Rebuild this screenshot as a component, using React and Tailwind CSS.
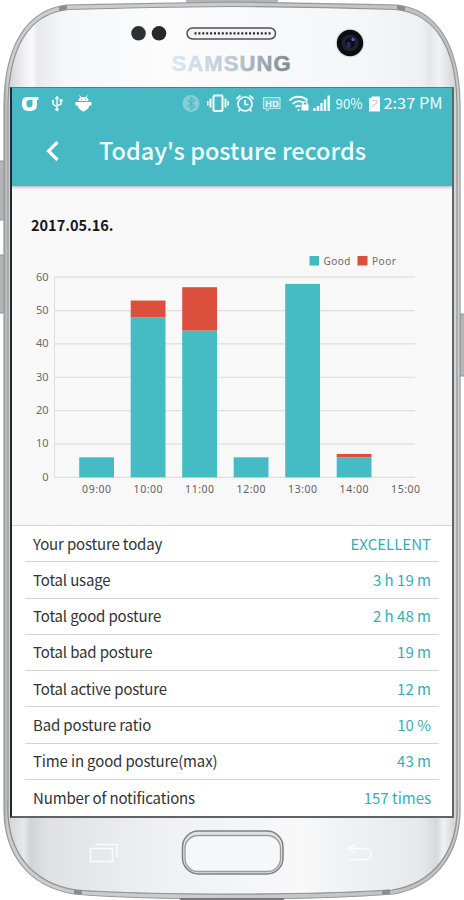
import React from 'react';

const hours = [
  { label: '09:00', good: 6, poor: 0 },
  { label: '10:00', good: 48, poor: 5 },
  { label: '11:00', good: 44, poor: 13 },
  { label: '12:00', good: 6, poor: 0 },
  { label: '13:00', good: 58, poor: 0 },
  { label: '14:00', good: 6, poor: 1 },
  { label: '15:00', good: 0, poor: 0 },
];

const records = [
  { label: 'Your posture today', value: 'EXCELLENT' },
  { label: 'Total usage', value: '3 h 19 m' },
  { label: 'Total good posture', value: '2 h 48 m' },
  { label: 'Total bad posture', value: '19 m' },
  { label: 'Total active posture', value: '12 m' },
  { label: 'Bad posture ratio', value: '10 %' },
  { label: 'Time in good posture(max)', value: '43 m' },
  { label: 'Number of notifications', value: '157 times' },
];

const BODY =
  'M4 103C5 48 25 10 67 5C120 4 170 3 232 2C294 3 344 4 397 5C439 10 459 48 460 103V812C459 852 438 886 394 894C340 898 290 899 232 899C174 899 120 898 74 894C26 886 5 852 4 812Z';
const FACE =
  'M8 103C9 50 27 14 68 9.500C120 8 170 7 232 6.500C294 7 344 8 396 9.500C437 14 456 50 457 103V812C456 850 435 883 392 890C340 893 290 894 232 894C174 894 120 893 76 890C30 883 9 850 8 812Z';

// Phone shell drawn behind the screen
const PhoneShell = () => (
  <svg className="absolute inset-0" width="464" height="900" viewBox="0 0 464 900" fill="none">
    <defs>
      <linearGradient id="rim" x1="0" y1="0" x2="1" y2="0">
        <stop offset="0" stopColor="#a2a4a6" />
        <stop offset="0.008" stopColor="#cccdcf" />
        <stop offset="0.5" stopColor="#c9cacc" />
        <stop offset="0.985" stopColor="#bfc1c2" />
        <stop offset="1" stopColor="#d5d6d7" />
      </linearGradient>
      <linearGradient id="face" x1="0" y1="0" x2="1" y2="0">
        <stop offset="0" stopColor="#cfd1d3" />
        <stop offset="0.03" stopColor="#ececee" />
        <stop offset="0.055" stopColor="#fafafb" />
        <stop offset="0.065" stopColor="#e9eaec" />
        <stop offset="0.13" stopColor="#f6f7f8" />
        <stop offset="0.35" stopColor="#fcfcfd" />
        <stop offset="0.8" stopColor="#f5f6f7" />
        <stop offset="0.92" stopColor="#eff0f2" />
        <stop offset="0.94" stopColor="#e4e6e8" />
        <stop offset="0.96" stopColor="#f1f2f3" />
        <stop offset="1" stopColor="#d0d2d4" />
      </linearGradient>
      <linearGradient id="chin" x1="0" y1="0" x2="1" y2="0">
        <stop offset="0" stopColor="#d2d4d5" />
        <stop offset="0.035" stopColor="#e7e8e9" />
        <stop offset="0.05" stopColor="#d1d3d5" />
        <stop offset="0.09" stopColor="#dfe1e3" />
        <stop offset="0.35" stopColor="#f0f1f3" />
        <stop offset="0.65" stopColor="#f8f8f9" />
        <stop offset="0.92" stopColor="#e6e8ea" />
        <stop offset="0.955" stopColor="#d6d9db" />
        <stop offset="0.97" stopColor="#f0f1f2" />
        <stop offset="1" stopColor="#cbced0" />
      </linearGradient>
      <linearGradient id="brand" x1="171" y1="0" x2="291" y2="0" gradientUnits="userSpaceOnUse">
        <stop offset="0" stopColor="#dfe7f1" />
        <stop offset="0.5" stopColor="#c0cad6" />
        <stop offset="1" stopColor="#7b8993" />
      </linearGradient>
      <clipPath id="chinClip">
        <rect y="800" width="464" height="100" />
      </clipPath>
    </defs>

    <g fill="#b4b5b6" stroke="#929394" strokeWidth="1">
      <rect x="-2" y="161" width="7" height="59" />
      <rect x="-2" y="255" width="7" height="58" />
      <rect x="460" y="314" width="7" height="62" />
    </g>
    <path d="M186 1.500h92" stroke="#b3b4b6" strokeWidth="3" />
    <path d={BODY} fill="url(#rim)" stroke="#97999b" strokeWidth="1.200" />
    <path d={FACE} fill="url(#face)" stroke="#929496" strokeWidth="1.200" />
    <g clipPath="url(#chinClip)">
      <path d={FACE} fill="url(#chin)" stroke="#929496" strokeWidth="1.200" />
      <path d="M180 899h104" stroke="#77777b" strokeWidth="2" />
    </g>
    <path d="M59 6.500l8-1.500v4.500l-8 1.500zM397 5l8 1.500v4.500l-8-1.500zM74 889.500l8 .500v4.500l-8-.500zM382 890l8-.500v4.500l-8 .500z" fill="#8a8c8f" />

    {/* sensors, speaker and camera */}
    <circle cx="138.500" cy="33.300" r="7.300" fill="#2d3035" />
    <circle cx="159" cy="33.300" r="7.300" fill="#25282d" />
    <rect x="187" y="28" width="88.500" height="11" rx="5.500" fill="#f4f4f5" stroke="#515155" strokeWidth="1.500" />
    <path d="M194.500 33.300h76" stroke="#25252a" strokeWidth="2.200" strokeDasharray="2 1.900" />
    <circle cx="350" cy="43" r="14.500" fill="#dfe1e5" />
    <circle cx="350" cy="43" r="13.200" fill="#0c0d11" />
    <circle cx="350" cy="43" r="8.500" fill="#20222b" />
    <circle cx="350" cy="43" r="5" fill="#0a0b1c" />
    <ellipse cx="348.500" cy="45" rx="2.300" ry="3.200" fill="#29275f" />
    <circle cx="353" cy="39.500" r="1.700" fill="#6152b5" />
    <text
      x="171.500"
      y="71"
      textLength="119"
      lengthAdjust="spacing"
      fill="url(#brand)"
      stroke="url(#brand)"
      strokeWidth="0.500"
      className="font-['Liberation_Sans_Narrow','Liberation_Sans'] text-[22px] font-bold"
    >
      SAMSUNG
    </text>

    {/* hardware keys */}
    <rect x="182.500" y="831" width="100.500" height="43" rx="16" fill="#e1e2e3" stroke="#7e8082" strokeWidth="1.500" />
    <rect x="185" y="835.500" width="95.500" height="36" rx="13" fill="#f6f7f8" stroke="#999b9d" strokeWidth="1.300" />
    <g stroke="#fafbfb" strokeWidth="1.600">
      <path d="M90.500 848.500h22v13h-22z" />
      <path d="M95 844.500h22v13" />
    </g>
    <path d="M348 848.500h17c8 0 8 11 0 11h-16M355 844.500l-7 4 7 3.500" stroke="#fbfbfc" strokeWidth="1.600" />
  </svg>
);

const StatusBar = () => (
  <svg className="block" width="440" height="32" viewBox="12 88 440 32" fill="none">
    <path d="M38.500 97H28c-4.500 0-6 2-6 6.500 0 5.500 2 7.500 7.500 7.500s7.500-2 7.500-7v-4h1.500zM26.500 103.500c0 3 1 4 3 4s3-1 3-4V100h-2c-3 0-4 .700-4 3.500Z" fill="#fff" fillRule="evenodd" />

    <g stroke="#e7f8f9" strokeWidth="1.500">
      <path d="M57 97v12M53 101v3l4 3M61 100v4l-4 2" />
      <path d="M54.500 99L57 95.500 59.500 99Z" fill="#e7f8f9" stroke="none" />
      <circle cx="53" cy="101" r="1.200" fill="#e7f8f9" stroke="none" />
      <path d="M59.500 99h3v3h-3z" fill="#e7f8f9" stroke="none" />
      <circle cx="57" cy="109.500" r="1.800" fill="#e7f8f9" stroke="none" />
    </g>

    <g fill="#fff">
      <path d="M78.500 101c0-3 2-4 5-4s5 1 5 4zM75.500 102h16v3.500h-16zM77.500 104h12c0 4-2.500 6-6 7.500-3.500-1.500-6-3.500-6-7.500z" />
      <path d="M79.500 95.500l1.500 2M87.500 95.500l-1.500 2" stroke="#fff" />
      <path d="M81 99.500h1M85 99.500h1" stroke="#47b9c4" />
    </g>

    <circle cx="191" cy="103.500" r="8.500" fill="#86ced5" />
    <path d="M187.500 100l7 6.500-3.500 3V97.500l3.500 3-7 6.500" stroke="#4cb5bf" strokeWidth="1.200" />

    <g stroke="#fff">
      <rect x="213.500" y="95.500" width="9" height="15.500" rx="1" strokeWidth="2" />
      <path d="M210.500 98.500v9M225.500 98.500v9" strokeWidth="2" />
      <path d="M207.800 101v4.500M228.200 101v4.500" strokeWidth="1.500" />
    </g>

    <g stroke="#f2ffff" strokeWidth="1.700">
      <circle cx="245" cy="104" r="7" />
      <path d="M245 100v4.500h3.500M236.500 99l4-3.500M253.500 99l-4-3.500" />
      <path d="M240 109.500l-1.500 2M250 109.500l1.500 2" />
    </g>

    <path d="M263.500 97.500h16.500v11h-10.500l-2.500 2-1-2h-2.500z" fill="#6cc6cd" stroke="#b5e3e6" strokeWidth="1.200" />
    <text x="265" y="106.500" textLength="14" lengthAdjust="spacingAndGlyphs" fill="#eaffff" className="font-['Noto_Sans'] text-[9.500px] font-semibold">HD</text>

    <g stroke="#fff" strokeWidth="1.900">
      <path d="M289.500 100.500c5-5 13-5 18 0M292.500 104c4-3.500 8-3.500 11-1M295.500 107c2-1.500 3.500-1.500 5-.500" />
      <path d="M298 109.500l1 1" />
    </g>
    <rect x="301.500" y="104.500" width="7" height="6" fill="#fff" />
    <path d="M303 105v-1.500c0-2.500 4-2.500 4 0v1.500" stroke="#fff" strokeWidth="1.200" />
    <path d="M314.500 111v-3M318 111v-5M321.500 111v-8M325 111v-11.500M328.700 111V95.500" stroke="#e9fbfb" strokeWidth="2.500" />

    <text x="335.500" y="108.500" textLength="27" lengthAdjust="spacingAndGlyphs" fill="#e9fbfb" className="font-['Noto_Sans_CJK_KR'] text-[14px]">90%</text>
    <path d="M371.500 96.500h8.500v15h-11V98h2.500z" fill="#fff" />
    <path d="M372.500 100.500h4.500v2.500l-4 2.500v2" stroke="#d3cfd0" strokeWidth="1.200" />
    <text x="383.500" y="109" textLength="59" lengthAdjust="spacingAndGlyphs" fill="#f2ffff" className="font-['Noto_Sans_CJK_KR'] text-[15.500px]">2:37 PM</text>
  </svg>
);

const PostureChart = () => {
  const scaleY = (n) => 477.3 - n * 3.335;

  return (
    <svg
      className="block font-['Noto_Sans']"
      width="440"
      height="265"
      viewBox="12 245 440 265"
      fill="none"
    >
      <rect x="309.500" y="256" width="9.500" height="9.500" fill="#41bac0" />
      <text x="323.500" y="265" textLength="27" fill="#6b6b6b" className="text-[10px]">Good</text>
      <rect x="357.500" y="256" width="10" height="9.500" fill="#d9503d" />
      <text x="372" y="265" textLength="24" fill="#6b6b6b" className="text-[10px]">Poor</text>

      {[0, 10, 20, 30, 40, 50, 60].map((tick) => (
        <g key={tick}>
          <path d={`M54 ${scaleY(tick)}H415`} stroke="#dddede" strokeWidth="1.200" />
          <text x="48.500" y={scaleY(tick) + 3.5} textAnchor="end" fill="#6b6b6b" className="text-[11px]">
            {tick}
          </text>
        </g>
      ))}
      <path d="M54.500 277v200" stroke="#dddede" />

      {hours.map(({ label, good, poor }, i) => {
        const x = 79.2 + i * 51.5;
        return (
          <g key={label}>
            <rect x={x} y={scaleY(good)} width="34.800" height={good * 3.335} fill="#45bcc3" />
            <rect x={x} y={scaleY(good + poor)} width="34.800" height={poor * 3.335} fill="#db4f3c" />
            <text x={x + 17.4} y="492.500" textAnchor="middle" textLength="29" fill="#5f5f5f" className="text-[10.500px]">
              {label}
            </text>
          </g>
        );
      })}
    </svg>
  );
};

const App = () => {
  return (
    <div className="relative h-[900px] w-[464px] overflow-hidden bg-white font-['Noto_Sans_CJK_KR',sans-serif]">
      <PhoneShell />

      <div className="relative pl-2.5 pt-[87px]">
        <div className="flex h-[731px] w-[444px] flex-col overflow-hidden border-b-2 border-l-2 border-r-2 border-t border-b-[#606264] border-l-[#222929] border-r-[#606466] border-t-[#537f83] bg-white">
          <header className="relative h-[98px] shrink-0 bg-[#47b9c4] shadow-[0_1px_3px_rgba(0,0,0,0.3)]">
            <StatusBar />
            <div className="flex h-[62px] items-center pl-[34px]">
              <svg width="13" height="20" viewBox="0 0 13 20" fill="none">
                <path d="M11.500 1L2.500 10l9 9" stroke="#fff" strokeWidth="3.200" />
              </svg>
              <h1 className="-mt-0.5 ml-10 whitespace-nowrap text-[23.500px] font-medium leading-8 text-[#f1ffff]">
                Today's posture records
              </h1>
            </div>
          </header>

          <section className="h-[340px] shrink-0 border-b border-[#d3d4d4] bg-[#f8f8f8]">
            <h2 className="flex h-[59px] items-end pl-[19px]">
              <span className="mb-2 text-[14.500px] font-bold leading-6 text-[#171717]">2017.05.16.</span>
            </h2>
            <PostureChart />
          </section>

          <ul className="mx-[13px]">
            {records.map(({ label, value }) => (
              <li
                key={label}
                className="flex h-[36.250px] items-center justify-between border-b border-[#d4d5d5] pl-2 pr-2 text-[15px] leading-6 last:border-b-0"
              >
                <span className="tracking-[-0.15px] text-[#333]">{label}</span>
                <span className="text-[#33afb4]">{value}</span>
              </li>
            ))}
          </ul>
        </div>
      </div>
    </div>
  );
};

export default App;
